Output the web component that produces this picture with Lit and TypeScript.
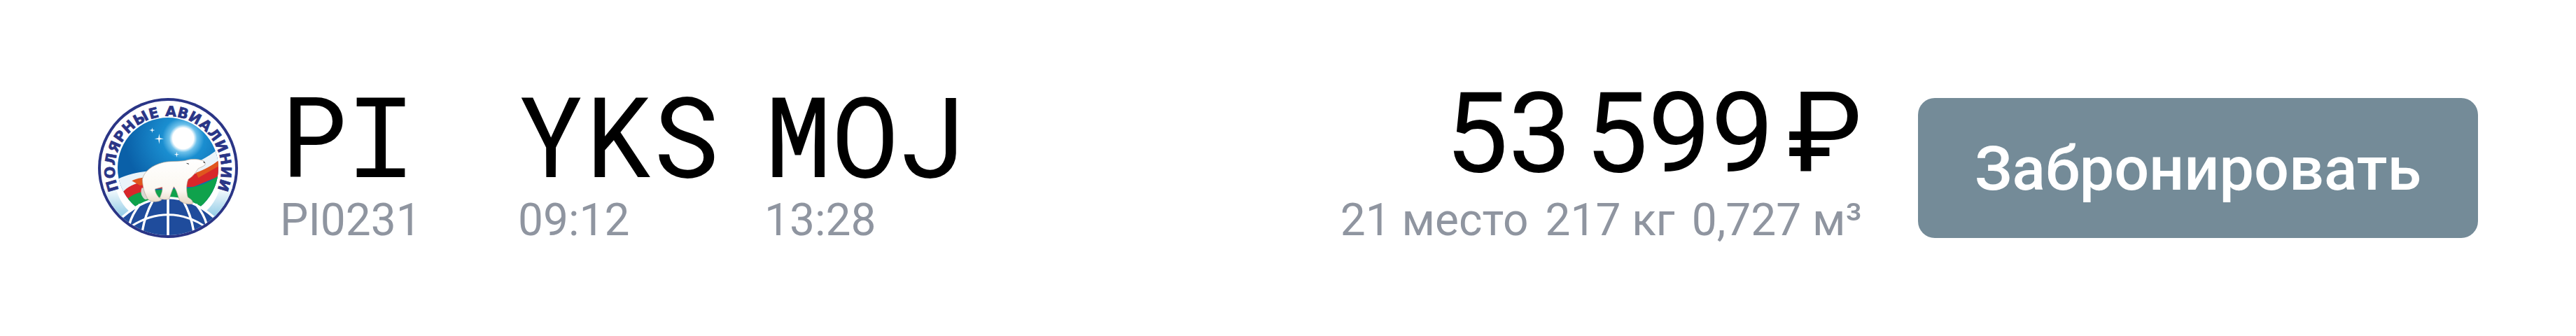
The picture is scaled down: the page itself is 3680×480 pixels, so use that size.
import { LitElement, html, css } from "lit";
import { customElement } from "lit/decorators.js";

const logo = html`<svg class="logo" viewBox="60 30 600 600" role="img" aria-label="Полярные Авиалинии">
  <defs>
    <radialGradient id="sky" gradientUnits="userSpaceOnUse" cx="425" cy="203" r="250">
      <stop offset="0" stop-color="#ffffff"/><stop offset=".18" stop-color="#ffffff"/>
      <stop offset=".24" stop-color="#6cc0ea"/><stop offset=".36" stop-color="#1a8ed0"/>
      <stop offset="1" stop-color="#0a60a8"/>
    </radialGradient>
    <linearGradient id="side" x1="0" y1="0" x2="0" y2="1">
      <stop offset="0" stop-color="#ffffff"/><stop offset="1" stop-color="#7fc3e2"/>
    </linearGradient>
    <linearGradient id="fur" x1="0" y1="0" x2="0" y2="1">
      <stop offset="0" stop-color="#ffffff"/><stop offset=".7" stop-color="#fbf7f0"/><stop offset="1" stop-color="#e6d6c4"/>
    </linearGradient>
    <clipPath id="inner"><circle cx="360" cy="330" r="288"/></clipPath>
    <clipPath id="disc"><circle cx="360" cy="330" r="216"/></clipPath>
    <path id="arc" d="M157 440 A228 228 0 1 1 563 440"/>
  </defs>
  <circle cx="360" cy="330" r="300" fill="#2a3586"/>
  <circle cx="360" cy="330" r="288" fill="#fff"/>
  <g clip-path="url(#inner)">
    <path d="M70 410 L135 410 C150 470 180 510 215 530 L165 560 L100 520Z" fill="url(#side)"/>
    <path d="M650 410 L585 410 C570 460 545 500 510 525 L560 560 L620 520Z" fill="url(#side)"/>
  </g>
  <g clip-path="url(#disc)">
    <rect x="140" y="110" width="440" height="440" fill="url(#sky)"/>
    <path d="M140 380 C230 335 320 345 420 325 C480 312 530 285 580 245 L580 330 L150 445Z" fill="#eaf3f9"/>
    <path d="M165 435 C215 375 320 385 430 365 C490 355 540 330 580 295 L580 365 L470 410 L300 420 L190 470Z" fill="#d8272a"/>
    <path d="M205 385 C240 365 290 372 320 372 L440 360 L440 380 L240 405Z" fill="#e0561e"/>
    <path d="M480 350 C520 335 555 315 580 295 L580 320 L490 372Z" fill="#e0561e"/>
    <path d="M185 465 C225 420 320 425 430 418 C490 412 540 390 580 360 L580 470 L510 495 L220 495Z" fill="#0fa24c"/>
  </g>
  <circle cx="425" cy="203" r="44" fill="#fff"/>
  <g fill="#fff">
    <path d="M322 183 L325 202 L342 205 L325 208 L322 227 L319 208 L302 205 L319 202Z"/>
    <path d="M292 157 L294 166 L304 168 L294 170 L292 179 L290 170 L280 168 L290 166Z"/>
    <path d="M397 260 L399 270 L408 272 L399 274 L397 284 L395 274 L386 272 L395 270Z"/>
  </g>
  <g clip-path="url(#inner)">
    <path d="M165 540 Q260 458 360 458 Q460 458 555 540 L555 640 L165 640Z" fill="#1f4c9c"/>
    <g fill="none" stroke="#fff" stroke-width="10">
      <path d="M165 540 Q260 458 360 458 Q460 458 555 540"/>
      <path d="M205 578 Q280 530 360 530 Q440 530 515 578" stroke-width="9"/>
      <path d="M360 458 V630" stroke-width="11"/>
      <path d="M295 470 Q262 530 250 600"/><path d="M425 470 Q458 530 470 600"/>
      <path d="M240 485 Q205 530 195 570"/><path d="M480 485 Q515 530 525 570"/>
    </g>
  </g>
  <path d="M248 415 C240 430 245 455 262 465 L280 462 L275 420Z" fill="#d9d6d2"/>
  <path d="M250 378 C258 345 290 318 340 306 C375 298 415 305 445 295 C465 290 490 292 505 297 C515 300 522 308 519 316 C510 325 498 328 490 332 C480 345 470 365 447 378 C438 400 438 430 445 455 C455 462 470 470 465 483 C450 488 425 482 410 470 C402 450 398 425 385 410 C375 430 370 450 365 462 C350 468 335 465 325 458 C332 440 338 425 335 412 L305 420 C303 435 318 455 332 468 C310 478 290 476 275 465 C262 445 252 420 250 378Z" fill="url(#fur)" stroke="#b5a594" stroke-width="2"/>
  <path d="M440 310 l10 3" stroke="#333" stroke-width="3"/>
  <path d="M512 303 l6 5" stroke="#333" stroke-width="4"/>
  <text class="ring"><textPath href="#arc" startOffset="50%" text-anchor="middle">ПОЛЯРНЫЕ АВИАЛИНИИ</textPath></text>
</svg>`;

@customElement("app-root")
export class AppRoot extends LitElement {
  static styles = css`
    :host { display: block; width: 3680px; height: 480px; background: #fff; overflow: hidden; font-family: Roboto, "Noto Sans", sans-serif; }
    .row { display: flex; align-items: flex-start; padding: 140px 140px 0; }
    .logo { width: 200px; height: 200px; flex: none; margin-right: 60px; }
    .ring { font: bold 61px "DejaVu Sans", sans-serif; letter-spacing: 1.5px; fill: #2a3586; stroke: #2a3586; stroke-width: 2px; }
    .col { display: flex; flex-direction: column; }
    .c1 { width: 340px; } .c2 { width: 352px; }
    .spacer { flex: 1; }
    .big { font-size: 160px; font-weight: 400; line-height: 130px; height: 130px; margin-top: -14px; color: #000; white-space: pre; word-spacing: -20px; }
    .mono { font-family: "Roboto Mono", "DejaVu Sans Mono", monospace; }
    .sub { font-size: 64px; line-height: 70px; margin-top: 24px; color: #8f95a0; white-space: pre; }
    .right { align-items: flex-end; margin-right: 80px; }
    .sub span + span { margin-left: 24px; }
    .btn { width: 800px; height: 200px; border: 0; border-radius: 24px; background: #748b98; color: #fff; font: 500 88px Roboto, sans-serif; padding: 0; }
  `;
  render() {
    return html`<div class="row">
      ${logo}
      <div class="col c1"><div class="big mono">PI</div><div class="sub">PI0231</div></div>
      <div class="col c2"><div class="big mono">YKS</div><div class="sub">09:12</div></div>
      <div class="col"><div class="big mono">MOJ</div><div class="sub">13:28</div></div>
      <div class="spacer"></div>
      <div class="col right"><div class="big">53 599 ₽</div>
        <div class="sub"><span>21 место</span><span>217 кг</span><span>0,727 м³</span></div></div>
      <button class="btn">Забронировать</button>
    </div>`;
  }
}
